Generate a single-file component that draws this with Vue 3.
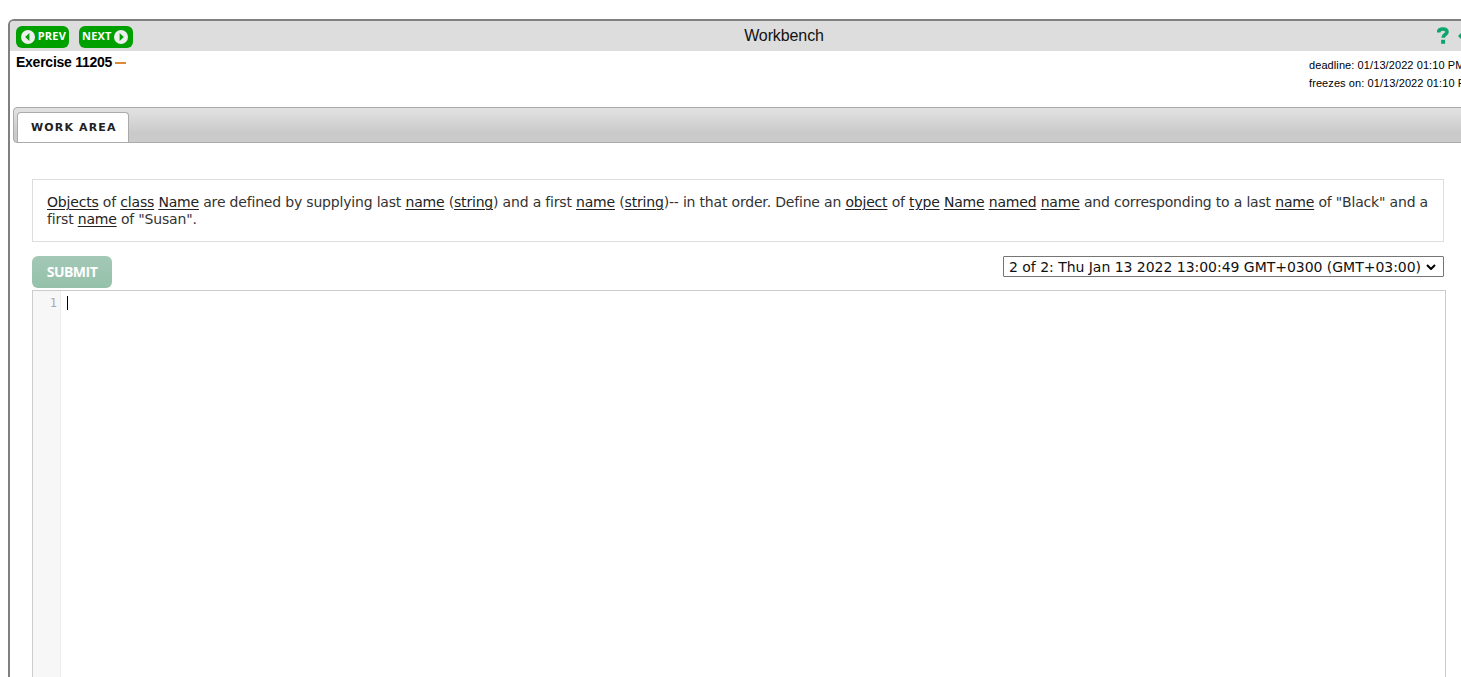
<template>
  <div class="page">
    <div class="workbench">
      <header class="topbar">
        <div class="nav-buttons">
          <button type="button" class="nav-btn">
            <svg class="nav-icon" viewBox="0 0 14 14">
              <circle cx="7" cy="7" r="7" />
              <path d="M8.4 3v8L4.2 7z" />
            </svg>
            <span class="prev-text">PREV</span>
          </button>
          <button type="button" class="nav-btn">
            <span class="next-text">NEXT</span>
            <svg class="nav-icon" viewBox="0 0 14 14">
              <circle cx="7" cy="7" r="7" />
              <path d="M5.6 3v8L9.8 7z" />
            </svg>
          </button>
        </div>
        <div class="title">Workbench</div>
        <div class="tools">
          <svg class="help-icon" viewBox="0 0 12 17">
            <path d="M1.6 5.6C1.6 3 3.2 2 5.8 2s4.2 1 4.2 3c0 2.6-3.9 2.6-3.9 5.8" />
            <rect x="4.1" y="12.8" width="4" height="4" />
          </svg>
          <svg class="arrow-icon" viewBox="0 0 14 14">
            <path d="M0 7 6 1v4h8v4H6v4z" />
          </svg>
        </div>
      </header>

      <section class="info">
        <div class="exercise">
          <span class="exercise-name">Exercise {{ exerciseId }}</span>
          <span class="status-dash"></span>
        </div>
        <div class="dates">
          <div v-for="date in dates" :key="date.label">{{ date.label }}: {{ date.value }}</div>
        </div>
      </section>

      <nav class="tabs">
        <div class="tab"><span class="tab-text">WORK AREA</span></div>
      </nav>

      <main class="work-area">
        <div class="instructions">
          <div v-for="(line, i) in lines" :key="i" class="line">
            <span class="line-text"><template v-for="(part, j) in line" :key="j"><u v-if="j % 2 === 0">{{ part }}</u><template v-else>{{ part }}</template></template></span>
          </div>
        </div>

        <div class="actions">
          <button type="button" class="submit"><span class="submit-text">SUBMIT</span></button>
          <div class="history">
            <span class="history-text">{{ submission }}</span>
            <svg class="chevron" viewBox="0 0 10 6">
              <path d="M1 1l4 4 4-4" />
            </svg>
          </div>
        </div>

        <div class="editor">
          <div class="gutter">1</div>
          <div class="code"><span class="cursor"></span></div>
        </div>
      </main>
    </div>
  </div>
</template>

<script setup>
import { ref } from 'vue'

const exerciseId = ref('11205')

const dates = [
  { label: 'deadline', value: '01/13/2022 01:10 PM' },
  { label: 'freezes on', value: '01/13/2022 01:10 PM' }
]

// even entries are underlined glossary terms, odd entries are plain text
const lines = [
  [
    'Objects', ' of ', 'class', ' ', 'Name', ' are defined by supplying last ', 'name', ' (', 'string',
    ') and a first ', 'name', ' (', 'string', ')-- in that order. Define an ', 'object', ' of ', 'type',
    ' ', 'Name', ' ', 'named', ' ', 'name', ' and corresponding to a last ', 'name', ' of "Black" and a'
  ],
  ['', 'first ', 'name', ' of "Susan".']
]

const submission = ref('2 of 2: Thu Jan 13 2022 13:00:49 GMT+0300 (GMT+03:00)')
</script>

<style>
body {
  margin: 0;
  background: #fff;
  overflow: hidden;
}
</style>

<style scoped>
.page {
  box-sizing: border-box;
  width: 1461px;
  height: 677px;
  padding: 19px 0 0 8px;
  overflow: hidden;
  font-family: "Liberation Sans", Arial, sans-serif;
  color: #000;
}

.workbench {
  box-sizing: border-box;
  width: 1552px;
  height: 700px;
  border: 2px solid #808080;
  border-radius: 6px;
}

.topbar {
  display: grid;
  grid-template-columns: 1fr auto 1fr;
  height: 30px;
  background: #ddd;
  border-radius: 4px 4px 0 0;
}

.nav-buttons {
  display: flex;
  gap: 10px;
  padding: 5px 0 0 6px;
}

.nav-btn {
  display: flex;
  align-items: center;
  justify-content: space-between;
  box-sizing: border-box;
  width: 53px;
  height: 22px;
  padding: 0 3px 0 5px;
  border: 0;
  border-radius: 6px;
  background: #00a000;
  color: #fff;
  font: bold 11px/20px "Open Sans", sans-serif;
  letter-spacing: 0.2px;
}

.nav-btn + .nav-btn {
  width: 54px;
  padding: 0 5px 0 3px;
}

.nav-btn span {
  height: 22px;
}

.nav-icon {
  width: 14px;
  height: 14px;
}

.nav-icon circle {
  fill: #eee;
}

.nav-icon path {
  fill: #00a000;
}

.title {
  font-size: 16px;
  line-height: 30px;
  letter-spacing: -0.1px;
  color: #111;
}

.tools {
  display: flex;
  justify-content: flex-end;
  gap: 9px;
  padding: 6px 86px 0 0;
}

.help-icon {
  width: 12px;
  height: 17px;
  fill: #0aa66c;
}

.help-icon path {
  fill: none;
  stroke: #0aa66c;
  stroke-width: 3.6;
}

.arrow-icon {
  width: 14px;
  height: 14px;
  margin-top: 2px;
  fill: #0aa66c;
}

.info {
  display: flex;
  justify-content: space-between;
  height: 56px;
}

.exercise {
  display: flex;
  gap: 3px;
  padding: 3px 0 0 6px;
  font-size: 14px;
  line-height: 16px;
  font-weight: bold;
  letter-spacing: -0.25px;
}

.status-dash {
  width: 11px;
  height: 2px;
  margin-top: 8px;
  background: #dc8a35;
}

.dates {
  width: 249px;
  padding-top: 5px;
  font-size: 11px;
  line-height: 18px;
  letter-spacing: 0.09px;
  white-space: nowrap;
}

.tabs {
  display: flex;
  align-items: flex-end;
  box-sizing: border-box;
  height: 36px;
  margin: 0 3px;
  padding-left: 3px;
  border: 1px solid #aaa;
  border-radius: 4px;
  background: linear-gradient(#e1e1e1, #dedede 15%, #c9c9c9 75%, #cccccc);
}

.tab {
  box-sizing: border-box;
  width: 112px;
  height: 30px;
  padding-left: 13px;
  border: 1px solid #aaa;
  border-bottom: 0;
  border-radius: 4px 4px 0 0;
  background: #fff;
  color: #212121;
  font: bold 11px/29px "DejaVu Sans", Verdana, sans-serif;
  letter-spacing: 1.15px;
  white-space: nowrap;
}

.work-area {
  padding: 36px 0 0 22px;
}

.instructions {
  box-sizing: border-box;
  width: 1412px;
  height: 63px;
  padding: 14px;
  border: 1px solid #ddd;
  color: #333;
  font: 14px/17px "DejaVu Sans", Verdana, sans-serif;
  letter-spacing: -0.185px;
  white-space: nowrap;
}

.instructions u {
  color: #222;
  text-underline-offset: 2px;
  text-decoration-thickness: 1px;
}

.actions {
  display: flex;
  justify-content: space-between;
  width: 1412px;
  height: 34px;
  padding-top: 14px;
}

.submit {
  width: 80px;
  height: 32px;
  padding: 0;
  border: 0;
  border-radius: 6px;
  background: linear-gradient(#a3c8b6, #95c1aa);
  color: #fff;
  font: bold 14px/32px "Open Sans", sans-serif;
  letter-spacing: -0.5px;
}

.history {
  display: flex;
  align-items: center;
  justify-content: space-between;
  box-sizing: border-box;
  width: 441px;
  height: 21px;
  padding: 0 7px 0 5px;
  border: 1px solid #767676;
  border-radius: 1px;
  color: #111;
  font: 14px/19px "DejaVu Sans", Verdana, sans-serif;
  letter-spacing: -0.03px;
  white-space: nowrap;
}

.history-text {
  padding-top: 2px;
}

.chevron {
  width: 10px;
  height: 6px;
  fill: none;
  stroke: #000;
  stroke-width: 2;
}

.editor {
  display: flex;
  box-sizing: border-box;
  width: 1414px;
  height: 420px;
  border: 1px solid #ccc;
}

.gutter {
  box-sizing: border-box;
  width: 28px;
  padding: 4px 3px 0 0;
  border-right: 1px solid #eee;
  background: #f7f7f7;
  color: #aaa;
  font: 12px/16px "DejaVu Sans Mono", monospace;
  text-align: right;
}

.code {
  flex: 1;
  padding: 5px 0 0 6px;
}

.cursor {
  display: block;
  width: 1px;
  height: 14px;
  background: #000;
}
</style>
